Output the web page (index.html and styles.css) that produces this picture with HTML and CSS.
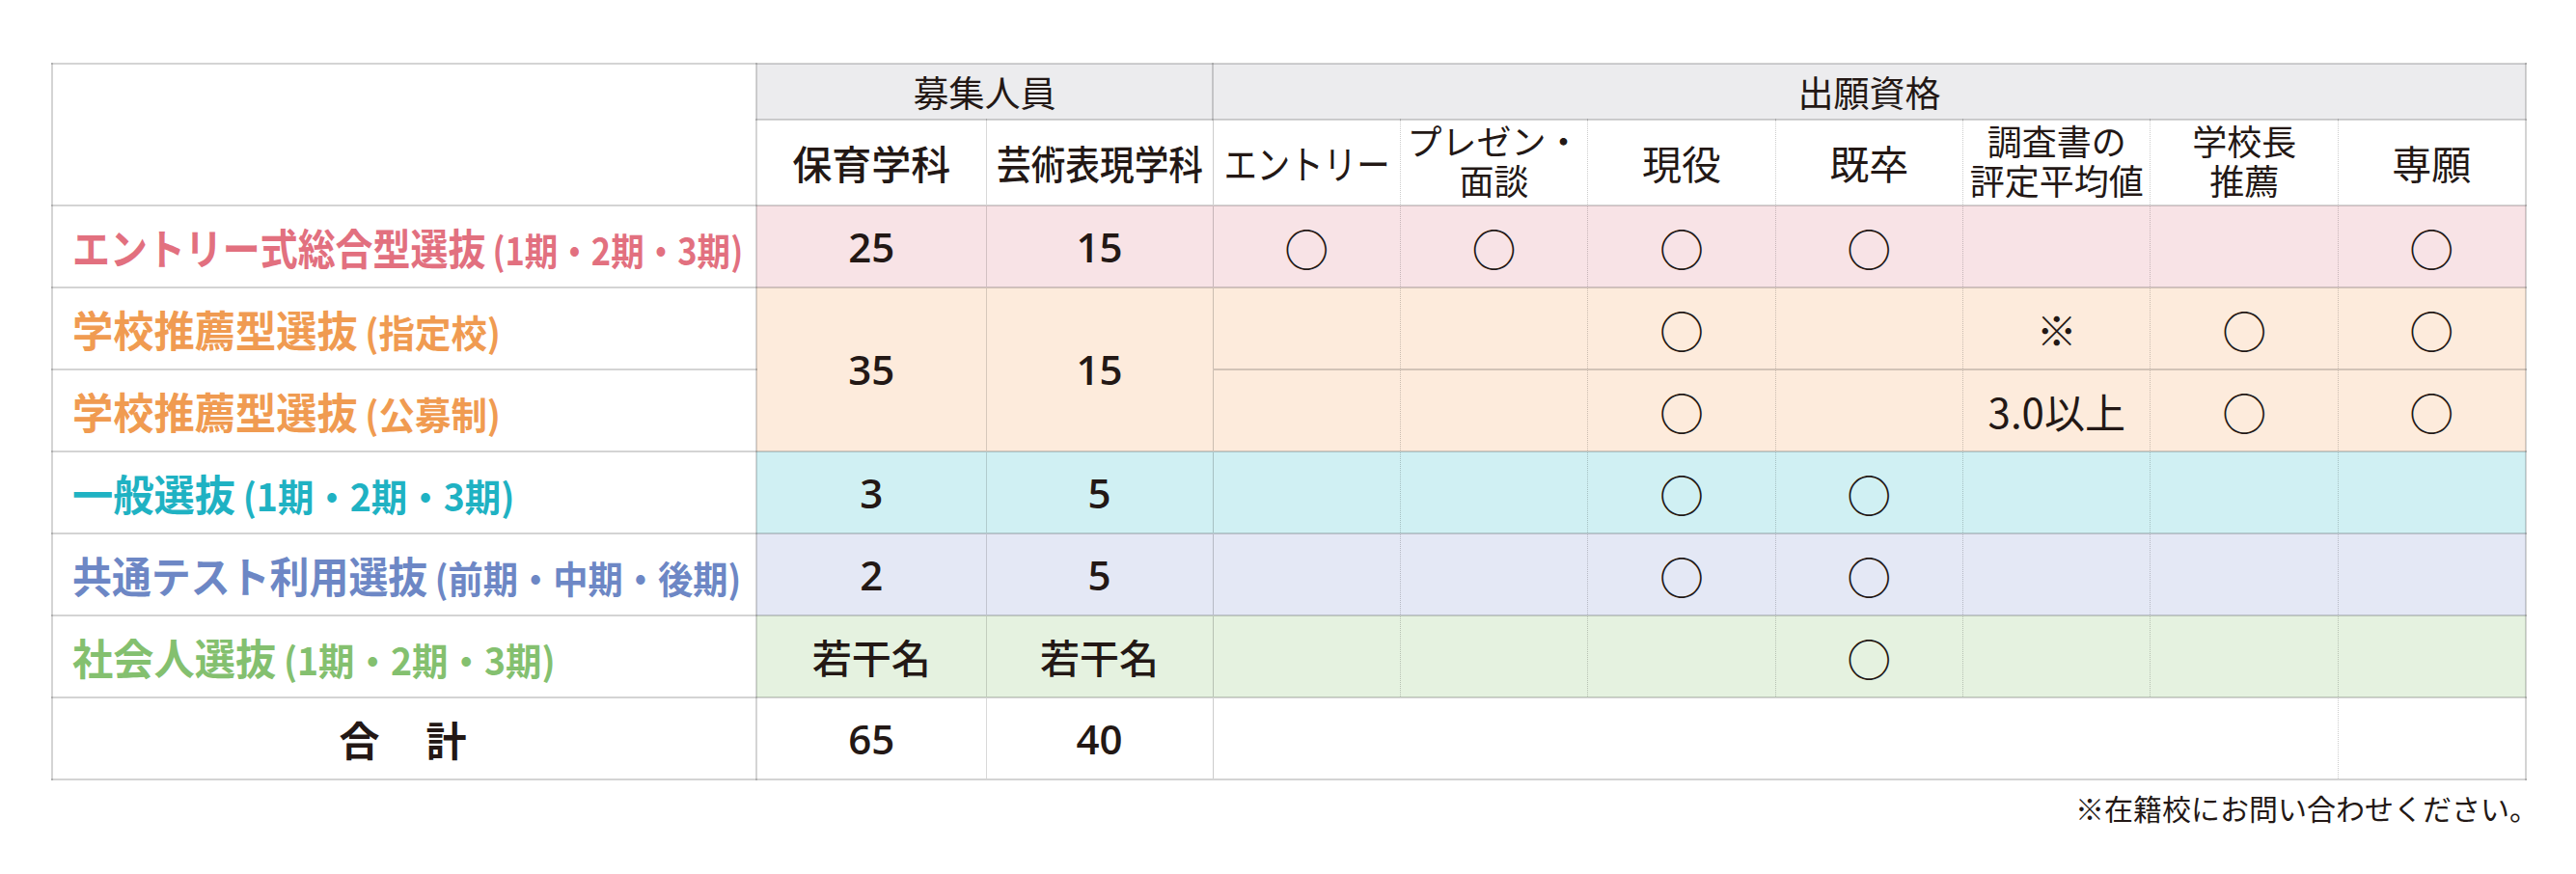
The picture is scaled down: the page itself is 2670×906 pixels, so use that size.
FILE: index.html
```html
<!DOCTYPE html>
<html lang="ja">
<head>
<meta charset="utf-8">
<title>入試区分・募集人員・出願資格</title>
<link rel="stylesheet" href="styles.css">
</head>
<body>
<div class="page">
  <table class="exam">
    <colgroup>
      <col class="c-label"><col class="c-num1"><col class="c-num2">
      <col class="c-q"><col class="c-q"><col class="c-q"><col class="c-q"><col class="c-q"><col class="c-q"><col class="c-q">
    </colgroup>
    <thead>
      <tr class="h1">
        <th rowspan="2" class="corner"></th>
        <th colspan="2" class="group group-a">募集人員</th>
        <th colspan="7" class="group">出願資格</th>
      </tr>
      <tr class="h2">
        <th class="dept d1"><div class="fit"><span class="sq sq-d1">保育学科</span></div></th>
        <th class="dept d2"><div class="fit"><span class="sq sq-d2">芸術表現学科</span></div></th>
        <th class="q"><div class="fit"><span class="sq sq-entry">エントリー</span></div></th>
        <th class="q two"><span class="ln">プレゼン・</span><span class="ln">面談</span></th>
        <th class="q one">現役</th>
        <th class="q one">既卒</th>
        <th class="q two"><span class="ln">調査書の</span><span class="ln">評定平均値</span></th>
        <th class="q two"><span class="ln">学校長</span><span class="ln">推薦</span></th>
        <th class="q one">専願</th>
      </tr>
    </thead>
    <tbody>
      <tr class="row pink">
        <th class="label"><span class="lb lb-tight"><span class="main">エントリー式総合型選抜</span><span class="sub">(1期・2期・3期)</span></span></th>
        <td class="num d1">25</td>
        <td class="num d2">15</td>
        <td class="q"><span class="maru">○</span></td>
        <td class="q"><span class="maru">○</span></td>
        <td class="q"><span class="maru">○</span></td>
        <td class="q"><span class="maru">○</span></td>
        <td class="q"></td>
        <td class="q"></td>
        <td class="q"><span class="maru">○</span></td>
      </tr>
      <tr class="row orange">
        <th class="label"><span class="lb"><span class="main">学校推薦型選抜</span><span class="sub">(指定校)</span></span></th>
        <td class="num d1" rowspan="2">35</td>
        <td class="num d2" rowspan="2">15</td>
        <td class="q"></td>
        <td class="q"></td>
        <td class="q"><span class="maru">○</span></td>
        <td class="q"></td>
        <td class="q"><span class="kome">※</span></td>
        <td class="q"><span class="maru">○</span></td>
        <td class="q"><span class="maru">○</span></td>
      </tr>
      <tr class="row orange">
        <th class="label"><span class="lb"><span class="main">学校推薦型選抜</span><span class="sub">(公募制)</span></span></th>
        <td class="q"></td>
        <td class="q"></td>
        <td class="q"><span class="maru">○</span></td>
        <td class="q"></td>
        <td class="q"><span class="txt">3.0以上</span></td>
        <td class="q"><span class="maru">○</span></td>
        <td class="q"><span class="maru">○</span></td>
      </tr>
      <tr class="row cyan">
        <th class="label"><span class="lb"><span class="main">一般選抜</span><span class="sub">(1期・2期・3期)</span></span></th>
        <td class="num d1">3</td>
        <td class="num d2">5</td>
        <td class="q"></td>
        <td class="q"></td>
        <td class="q"><span class="maru">○</span></td>
        <td class="q"><span class="maru">○</span></td>
        <td class="q"></td>
        <td class="q"></td>
        <td class="q"></td>
      </tr>
      <tr class="row blue">
        <th class="label"><span class="lb lb-mid"><span class="main">共通テスト利用選抜</span><span class="sub">(前期・中期・後期)</span></span></th>
        <td class="num d1">2</td>
        <td class="num d2">5</td>
        <td class="q"></td>
        <td class="q"></td>
        <td class="q"><span class="maru">○</span></td>
        <td class="q"><span class="maru">○</span></td>
        <td class="q"></td>
        <td class="q"></td>
        <td class="q"></td>
      </tr>
      <tr class="row green">
        <th class="label"><span class="lb"><span class="main">社会人選抜</span><span class="sub">(1期・2期・3期)</span></span></th>
        <td class="num d1 few">若干名</td>
        <td class="num d2 few">若干名</td>
        <td class="q"></td>
        <td class="q"></td>
        <td class="q"></td>
        <td class="q"><span class="maru">○</span></td>
        <td class="q"></td>
        <td class="q"></td>
        <td class="q"></td>
      </tr>
      <tr class="row total">
        <th class="label sum">合　計</th>
        <td class="num d1">65</td>
        <td class="num d2">40</td>
        <td class="q blank" colspan="6"></td>
        <td class="q"></td>
      </tr>
    </tbody>
  </table>
  <p class="note">※在籍校にお問い合わせください。</p>
</div>
</body>
</html>
```

FILE: styles.css
```css
html, body {
  margin: 0;
  padding: 0;
  background: #ffffff;
}

body {
  font-family: "Noto Sans CJK JP", "Noto Sans", sans-serif;
  color: #231815;
}

.page {
  padding: 65px 0 0 53px;
  width: 2564px;
}

.exam {
  border-collapse: collapse;
  table-layout: fixed;
  width: 2564px;
}

.c-label { width: 730px; }
.c-num1 { width: 238px; }
.c-num2 { width: 235px; }
.c-q { width: 194.4px; }

.exam th,
.exam td {
  padding: 0;
  border: 2px solid rgba(0, 0, 0, 0.17);
  text-align: center;
  vertical-align: middle;
  line-height: 1;
  font-weight: 400;
}

/* header */
.h1 { height: 58px; }
.h2 { height: 89px; }

.exam .corner { background: #ffffff; }

.exam .group {
  background: #ececee;
  font-size: 37px;
  font-weight: 400;
  border-left: 1px solid rgba(0, 0, 0, 0.2);
}

.fit {
  display: flex;
  justify-content: center;
  align-items: center;
}

.sq {
  display: inline-block;
  white-space: nowrap;
  transform: scaleX(var(--sx, 1));
}

.exam .dept {
  background: #ffffff;
  font-size: 41px;
  font-weight: 500;
}

.sq-d2 { --sx: 0.87; margin: 0 -16px; }
.sq-entry { --sx: 0.84; margin: 0 -16px; }

.exam .h2 .q {
  background: #ffffff;
  font-size: 41px;
}

.exam .h2 .q.two {
  font-size: 36px;
  line-height: 41px;
}

.ln {
  display: block;
  font-family: "Liberation Sans", "Noto Sans CJK JP", sans-serif;
  line-height: 41px;
  white-space: nowrap;
}

/* vertical rules */
.exam .d1 { border-right: 1px solid rgba(0, 0, 0, 0.15); }
.exam .d2 { border-left: 1px solid rgba(0, 0, 0, 0.15); border-right: 1px solid rgba(0, 0, 0, 0.2); }
.exam .q { border-left: 1px dotted rgba(0, 0, 0, 0.2); border-right: 1px dotted rgba(0, 0, 0, 0.2); }
.exam .q:last-child { border-right: 2px solid rgba(0, 0, 0, 0.17); }

/* body rows */
.row { height: 85px; }

.exam .label {
  background: #ffffff;
  text-align: left;
  padding-left: 20px;
  white-space: nowrap;
}

.lb {
  display: inline-block;
  transform-origin: left center;
  transform: scaleX(0.96);
  font-weight: 700;
}

.lb.lb-tight { transform: scaleX(0.885); }
.lb.lb-mid { transform: scaleX(0.93); }

.lb .main { font-size: 44px; }
.lb .sub { font-size: 39px; margin-left: 8px; }

.pink .label { color: #e2707f; }
.orange .label { color: #f09b51; }
.cyan .label { color: #1fb2c3; }
.blue .label { color: #6d87c5; }
.green .label { color: #84c06f; }

.pink td { background: #f8e3e6; }
.orange td { background: #fdebdc; }
.cyan td { background: #d0f0f3; }
.blue td { background: #e4e8f5; }
.green td { background: #e5f2e0; }
.total td { background: #ffffff; }

.exam .num {
  font-family: "Open Sans", "Noto Sans CJK JP", sans-serif;
  font-size: 42px;
  font-weight: 600;
}

.exam .num.few {
  font-family: "Noto Sans CJK JP", sans-serif;
  font-size: 41px;
  font-weight: 500;
}

.maru {
  font-size: 46px;
  line-height: 1;
}

.kome {
  font-size: 42px;
}

.txt {
  font-size: 42px;
}

.exam .label.sum {
  text-align: center;
  padding-left: 0;
  color: #231815;
  font-size: 42px;
  font-weight: 700;
  letter-spacing: 3px;
}

.note {
  margin: 10px -14px 0 0;
  text-align: right;
  font-size: 30px;
  line-height: 1.2;
}
```
